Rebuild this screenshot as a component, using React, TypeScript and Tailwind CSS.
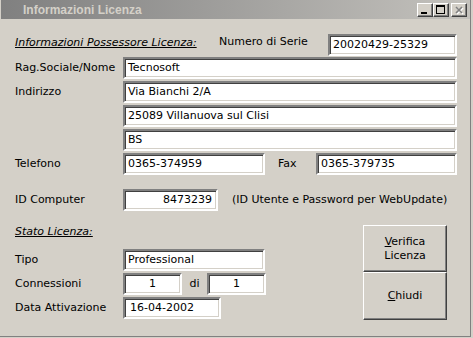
import React from 'react';

type FieldProps = {
    className: string;
    children?: React.ReactNode;
};

// sunken win2k edit box
const Field: React.FC<FieldProps> = ({ className, children }) => (
    <div
        className={`h-[22px] bg-white border-2 border-t-[#808080] border-l-[#808080] border-b-white border-r-white shadow-[inset_1px_1px_0_#404040,inset_-1px_-1px_0_#d4d0c8] flex items-center whitespace-nowrap overflow-hidden ${className}`}
    >
        {children}
    </div>
);

const WinButton: React.FC<{ className: string; children: React.ReactNode }> = ({ className, children }) => (
    <div
        className={`w-[84px] border border-t-white border-l-white border-b-[#404040] border-r-[#404040] shadow-[inset_-1px_-1px_0_#808080] flex flex-col items-center justify-center text-center ${className}`}
    >
        {children}
    </div>
);

const CaptionButton: React.FC<{ children: React.ReactNode; className?: string }> = ({ children, className = '' }) => (
    <div
        className={`w-[16px] h-[14px] bg-[#d4d0c8] border border-t-white border-l-white border-b-[#404040] border-r-[#404040] shadow-[inset_-1px_-1px_0_#808080] ${className}`}
    >
        {children}
    </div>
);

const TitleBar = () => (
    <div className="h-[19px] bg-linear-to-r from-[#808080] to-[#c4c2bd] flex items-center justify-between pl-[22px] pr-[3px]">
        <span className="font-['Liberation_Sans',sans-serif] font-bold text-[12px] text-[#d4d0c8]">
            Informazioni Licenza
        </span>
        <div className="flex items-center">
            <CaptionButton>
                <svg width="14" height="12" viewBox="0 0 14 12">
                    <rect x="3" y="8" width="6" height="2" fill="#000" />
                </svg>
            </CaptionButton>
            <CaptionButton>
                <svg width="14" height="12" viewBox="0 0 14 12">
                    <rect x="2.5" y="1.5" width="8" height="8" fill="none" stroke="#000" />
                    <rect x="2" y="1" width="9" height="2" fill="#000" />
                </svg>
            </CaptionButton>
            <CaptionButton className="ml-[2px]">
                <svg width="14" height="12" viewBox="0 0 14 12">
                    <path d="M4 3 L10 9 M10 3 L4 9" stroke="#fff" strokeWidth="1.6" transform="translate(1 1)" />
                    <path d="M4 3 L10 9 M10 3 L4 9" stroke="#808080" strokeWidth="1.6" />
                </svg>
            </CaptionButton>
        </div>
    </div>
);

export default function App() {
    return (
        <div className="w-[473px] h-[338px] bg-[#d4d0c8] font-['DejaVu_Sans',sans-serif] text-[11px] leading-[14px] text-black overflow-hidden">
            <div className="w-[471px] h-[337px] border-r border-b border-[#808080] pl-px flex flex-col">
                <TitleBar />

                <div className="pl-[14px] pt-[15px] flex flex-col">
                    {/* Serial */}
                    <div className="flex items-start h-[22px] whitespace-nowrap">
                        <span className="w-[204px] italic underline mt-[2px]">Informazioni Possessore Licenza:</span>
                        <span className="w-[109px] mt-px">Numero di Serie</span>
                        <Field className="w-[129px] pl-[3px]">20020429-25329</Field>
                    </div>

                    {/* Anagrafica */}
                    <div className="flex flex-col gap-[2px] mt-px">
                        <div className="flex items-center h-[22px]">
                            <span className="w-[108px] whitespace-nowrap">Rag.Sociale/Nome</span>
                            <Field className="w-[334px] pl-[3px]">Tecnosoft</Field>
                        </div>
                        <div className="flex items-center h-[22px]">
                            <span className="w-[108px]">Indirizzo</span>
                            <Field className="w-[334px] pl-[3px]">Via Bianchi 2/A</Field>
                        </div>
                        <div className="flex items-center h-[22px]">
                            <div className="w-[108px]" />
                            <Field className="w-[334px] pl-[3px]">25089 Villanuova sul Clisi</Field>
                        </div>
                        <div className="flex items-center h-[22px]">
                            <div className="w-[108px]" />
                            <Field className="w-[334px] pl-[3px]">BS</Field>
                        </div>
                        <div className="flex items-center h-[22px]">
                            <span className="w-[108px]">Telefono</span>
                            <Field className="w-[142px] pl-[3px]">0365-374959</Field>
                            <span className="w-[51px] pl-[13px]">Fax</span>
                            <Field className="w-[141px] pl-[3px]">0365-379735</Field>
                        </div>
                    </div>

                    {/* ID computer */}
                    <div className="flex items-center h-[22px] mt-[14px] whitespace-nowrap">
                        <span className="w-[108px]">ID Computer</span>
                        <Field className="w-[95px] justify-end pr-[4px]">8473239</Field>
                        <span className="ml-[14px]">(ID Utente e Password per WebUpdate)</span>
                    </div>

                    {/* Stato licenza + buttons */}
                    <div className="flex mt-[14px]">
                        <div className="w-[348px] flex flex-col">
                            <div className="h-[24px]">
                                <span className="italic underline">Stato Licenza:</span>
                            </div>
                            <div className="flex flex-col gap-[2px]">
                                <div className="flex items-center h-[22px]">
                                    <span className="w-[108px]">Tipo</span>
                                    <Field className="w-[142px] pl-[3px]">Professional</Field>
                                </div>
                                <div className="flex items-center h-[22px]">
                                    <span className="w-[108px]">Connessioni</span>
                                    <Field className="w-[59px] justify-center">1</Field>
                                    <span className="w-[25px] text-center">di</span>
                                    <Field className="w-[59px] justify-center">1</Field>
                                </div>
                                <div className="flex items-center h-[22px]">
                                    <span className="w-[108px] whitespace-nowrap">Data Attivazione</span>
                                    <Field className="w-[98px] pl-[5px]">16-04-2002</Field>
                                </div>
                            </div>
                        </div>

                        <div className="flex flex-col">
                            <WinButton className="h-[47px]">
                                <span>
                                    <span className="underline">V</span>erifica
                                </span>
                                <span>Licenza</span>
                            </WinButton>
                            <WinButton className="h-[48px]">
                                <span>
                                    <span className="underline">C</span>hiudi
                                </span>
                            </WinButton>
                        </div>
                    </div>
                </div>
            </div>
        </div>
    );
}
